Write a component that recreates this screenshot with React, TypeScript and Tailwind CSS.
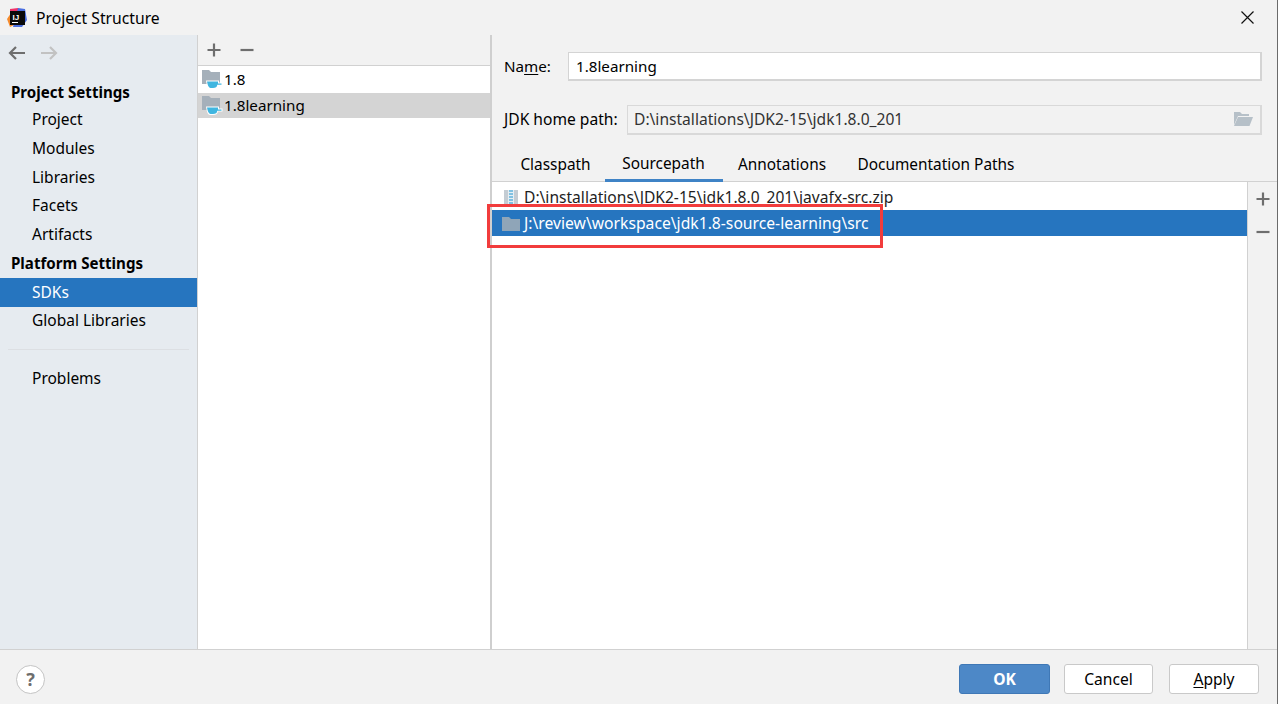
const FONT = "font-['Noto_Sans','Open_Sans','Liberation_Sans',sans-serif]";

const IdeaLogo = () => (
  <svg width="20" height="20" viewBox="0 0 20 20">
    <path d="M3 1 L11 0 L14 4 L6 14 L3 10 Z" fill="#f0336a" />
    <path d="M0 11 L4 5 L9 16 L3 19 Z" fill="#f58a2c" />
    <path d="M11 0 L18 1 L20 12 L15 19 L6 19 Z" fill="#4a6ee0" />
    <rect x="3" y="3" width="15" height="14" fill="#0a0a0a" />
    <rect x="5" y="14" width="6" height="1" fill="#fff" />
    <text x="5.5" y="11.5" fontSize="8" fontWeight="700" fill="#fff" fontFamily="Liberation Sans">IJ</text>
  </svg>
);

const SdkIcon = () => (
  <svg width="21" height="19" viewBox="0 0 21 19" className="shrink-0">
    <path d="M0 0 H7 L9 2 H18 V14 H0 Z" fill="#a5b0ba" />
    <path d="M4 10.5 H17 V12.5 H20.5 V15.5 H16 Q15.5 19 11 19 H8 Q5 19 4 10.5 Z" fill="#ffffff" />
    <path d="M5 11.5 H16 V13.5 H19.5 V14.8 H15.3 Q15 18 11 18 H8.5 Q6 18 5 11.5 Z" fill="#40b6e0" />
  </svg>
);

const FolderIcon = () => (
  <svg width="18" height="16" viewBox="0 0 18 16" className="shrink-0">
    <path d="M0 1 H7 L9 3 H18 V15 H0 Z" fill="#8fa5b8" />
  </svg>
);

const ZipIcon = () => (
  <svg width="14" height="16" viewBox="0 0 14 16" className="shrink-0">
    <rect x="0" y="0" width="14" height="16" fill="#c4ccd3" />
    <rect x="4" y="0" width="6" height="16" fill="#e4eef4" />
    <path d="M5 1 H9 M5 4 H9 M5 7 H9 M5 10 H9 M5 13 H9" stroke="#5fb3dc" strokeWidth="1.5" />
  </svg>
);

const OpenFolderIcon = () => (
  <svg width="20" height="15" viewBox="0 0 20 15">
    <path d="M1 0 H7 L9 2 H16 V4 H5 L1 13 Z" fill="#b6c0c8" />
    <path d="M5 5 H20 L16.5 14 H1 Z" fill="#b6c0c8" />
  </svg>
);

const PlusIcon = () => (
  <svg width="14" height="14" viewBox="0 0 14 14" className="shrink-0">
    <path d="M7 0.5 V13.5 M0.5 7 H13.5" stroke="#6e6e6e" strokeWidth="2.2" />
  </svg>
);

const MinusIcon = () => (
  <svg width="14" height="14" viewBox="0 0 14 14" className="shrink-0">
    <path d="M0.5 7 H13.5" stroke="#6e6e6e" strokeWidth="2.2" />
  </svg>
);

const NavArrow = ({ flip, color }: { flip?: boolean; color: string }) => (
  <svg width="17" height="14" viewBox="0 0 17 14" className={flip ? 'rotate-180' : ''}>
    <path d="M17 7 H2 M8 1 L2 7 L8 13" fill="none" stroke={color} strokeWidth="2.2" />
  </svg>
);

const CloseIcon = () => (
  <svg width="13" height="13" viewBox="0 0 13 13">
    <path d="M0.5 0.5 L12.5 12.5 M12.5 0.5 L0.5 12.5" stroke="#111" strokeWidth="1.2" />
  </svg>
);

const NavItem = ({ label, active }: { label: string; active?: boolean }) => (
  <div className={`h-[28.7px] pl-8 flex items-center text-[15.5px] ${active ? 'bg-[#2675bf] text-white' : 'text-black'}`}>
    {label}
  </div>
);

const App = () => {
  return (
    <div className={`w-[1281px] h-[704px] flex bg-white overflow-hidden text-black ${FONT}`}>
      <div className="relative w-[1278px] h-full flex flex-col bg-[#f2f2f2] border-r border-[#6b6b6b]">
        {/* Title bar */}
        <header className="h-[35px] flex items-center shrink-0">
          <div className="ml-[7px] w-5 flex"><IdeaLogo /></div>
          <span className="ml-[9px] pt-[2px] text-[15.7px]">Project Structure</span>
          <div className="ml-auto mr-[23px] flex"><CloseIcon /></div>
        </header>

        {/* Body */}
        <div className="flex-1 flex min-h-0">
          {/* Left nav */}
          <aside className="w-[198px] shrink-0 bg-[#e6ebf0] border-r border-[#d1d1d1] flex flex-col">
            <div className="h-9 flex items-center pl-2 gap-4 mb-2">
              <NavArrow color="#6e6e6e" />
              <NavArrow flip color="#c2c2c2" />
            </div>
            <div className="h-[26.6px] pl-[11px] flex items-center text-[15.1px] font-bold">Project Settings</div>
            <NavItem label="Project" />
            <NavItem label="Modules" />
            <NavItem label="Libraries" />
            <NavItem label="Facets" />
            <NavItem label="Artifacts" />
            <div className="h-[29px] pl-[11px] flex items-center text-[15.1px] font-bold">Platform Settings</div>
            <NavItem label="SDKs" active />
            <NavItem label="Global Libraries" />
            <div className="h-px bg-[#dcdfe3] mx-2 my-[14px]" />
            <NavItem label="Problems" />
          </aside>

          {/* SDK list */}
          <section className="w-[294px] shrink-0 bg-white border-r-2 border-[#cfcfcf] flex flex-col">
            <div className="h-[31px] bg-[#f2f2f2] border-b border-[#d1d1d1] flex items-center pl-[9px] gap-[19px]">
              <PlusIcon />
              <MinusIcon />
            </div>
            <div className="h-[27px] flex items-center pl-[4px] gap-[1px] text-[15.2px]">
              <SdkIcon />
              1.8
            </div>
            <div className="h-[25px] bg-[#d4d4d4] flex items-center pl-[4px] gap-[1px] text-[15.2px]">
              <SdkIcon />
              1.8learning
            </div>
          </section>

          {/* Detail */}
          <main className="flex-1 min-w-0 flex flex-col">
            <div className="flex items-center h-[29px] mt-[17px] pl-[12px] pr-[15px] text-[15.2px]">
              <span className="w-[64px]">Na<span className="underline underline-offset-2">m</span>e:</span>
              <div className="flex-1 h-[29px] bg-white border border-[#d4d4d4] border-b-2 border-r-2 flex items-center pl-[7px]">1.8learning</div>
            </div>
            <div className="flex items-center h-[30px] mt-[24px] pl-[12px] pr-[15px] text-[15.6px]">
              <span className="w-[123px]">JDK home path:</span>
              <div className="flex-1 h-[30px] bg-[#f2f2f2] border border-[#d9d9d9] border-b-2 border-r-2 flex items-center justify-between pl-[6px] pr-[7px] text-[#333]">
                D:\installations\JDK2-15\jdk1.8.0_201
                <OpenFolderIcon />
              </div>
            </div>

            {/* Tabs */}
            <div className="flex h-[33px] mt-[14px] pl-[14px] border-b border-[#d1d1d1] text-[15.4px] shrink-0">
              <div className="w-[99px] flex items-center justify-center">Classpath</div>
              <div className="w-[118px] flex items-center justify-center border-b-[3px] border-[#3f83c6] pr-[1px] h-[33px]">Sourcepath</div>
              <div className="w-[118px] flex items-center justify-center">Annotations</div>
              <div className="w-[190px] flex items-center justify-center">Documentation Paths</div>
            </div>

            <div className="flex-1 flex min-h-0">
              <div className="flex-1 bg-white border-r border-[#d1d1d1] flex flex-col">
                <div className="h-7 flex items-center pl-[12px] pt-[3px] gap-[6px] text-[15.6px] text-[#1e1e1e]">
                  <ZipIcon />
                  D:\installations\JDK2-15\jdk1.8.0_201\javafx-src.zip
                </div>
                <div className="h-[26px] bg-[#2675bf] flex items-center pl-[10px] pt-[1px] gap-[4px] text-[15.7px] text-white">
                  <FolderIcon />
                  J:\review\workspace\jdk1.8-source-learning\src
                </div>
              </div>
              <div className="w-[29px] shrink-0 flex flex-col items-center pt-[10px] gap-[19px]">
                <PlusIcon />
                <MinusIcon />
              </div>
            </div>
          </main>
        </div>

        {/* Footer */}
        <footer className="h-[55px] shrink-0 border-t border-[#d1d1d1] flex items-center pt-1 pl-4 pr-[18px] text-[15.6px]">
          <div className="w-[29px] h-[29px] rounded-full bg-white border border-[#c4c4c4] flex items-center justify-center font-bold text-[#6e6e6e] text-[18px]">?</div>
          <button className="ml-auto w-[91px] h-[30px] rounded-[3px] bg-[#4d88c7] border border-[#3f78b6] text-white font-bold pt-px">OK</button>
          <button className="ml-[14px] w-[89px] h-[30px] rounded-[3px] bg-white border border-[#c9c9c9] pt-px">Cancel</button>
          <button className="ml-[16px] w-[90px] h-[30px] rounded-[3px] bg-white border border-[#c9c9c9] pt-px"><span className="underline underline-offset-2">A</span>pply</button>
        </footer>

        {/* Red annotation */}
        <div className="absolute left-[487px] top-[204px] w-[396px] h-[44px] border-[3px] border-[#f23c3c]" />
      </div>
    </div>
  );
};

export default App;
